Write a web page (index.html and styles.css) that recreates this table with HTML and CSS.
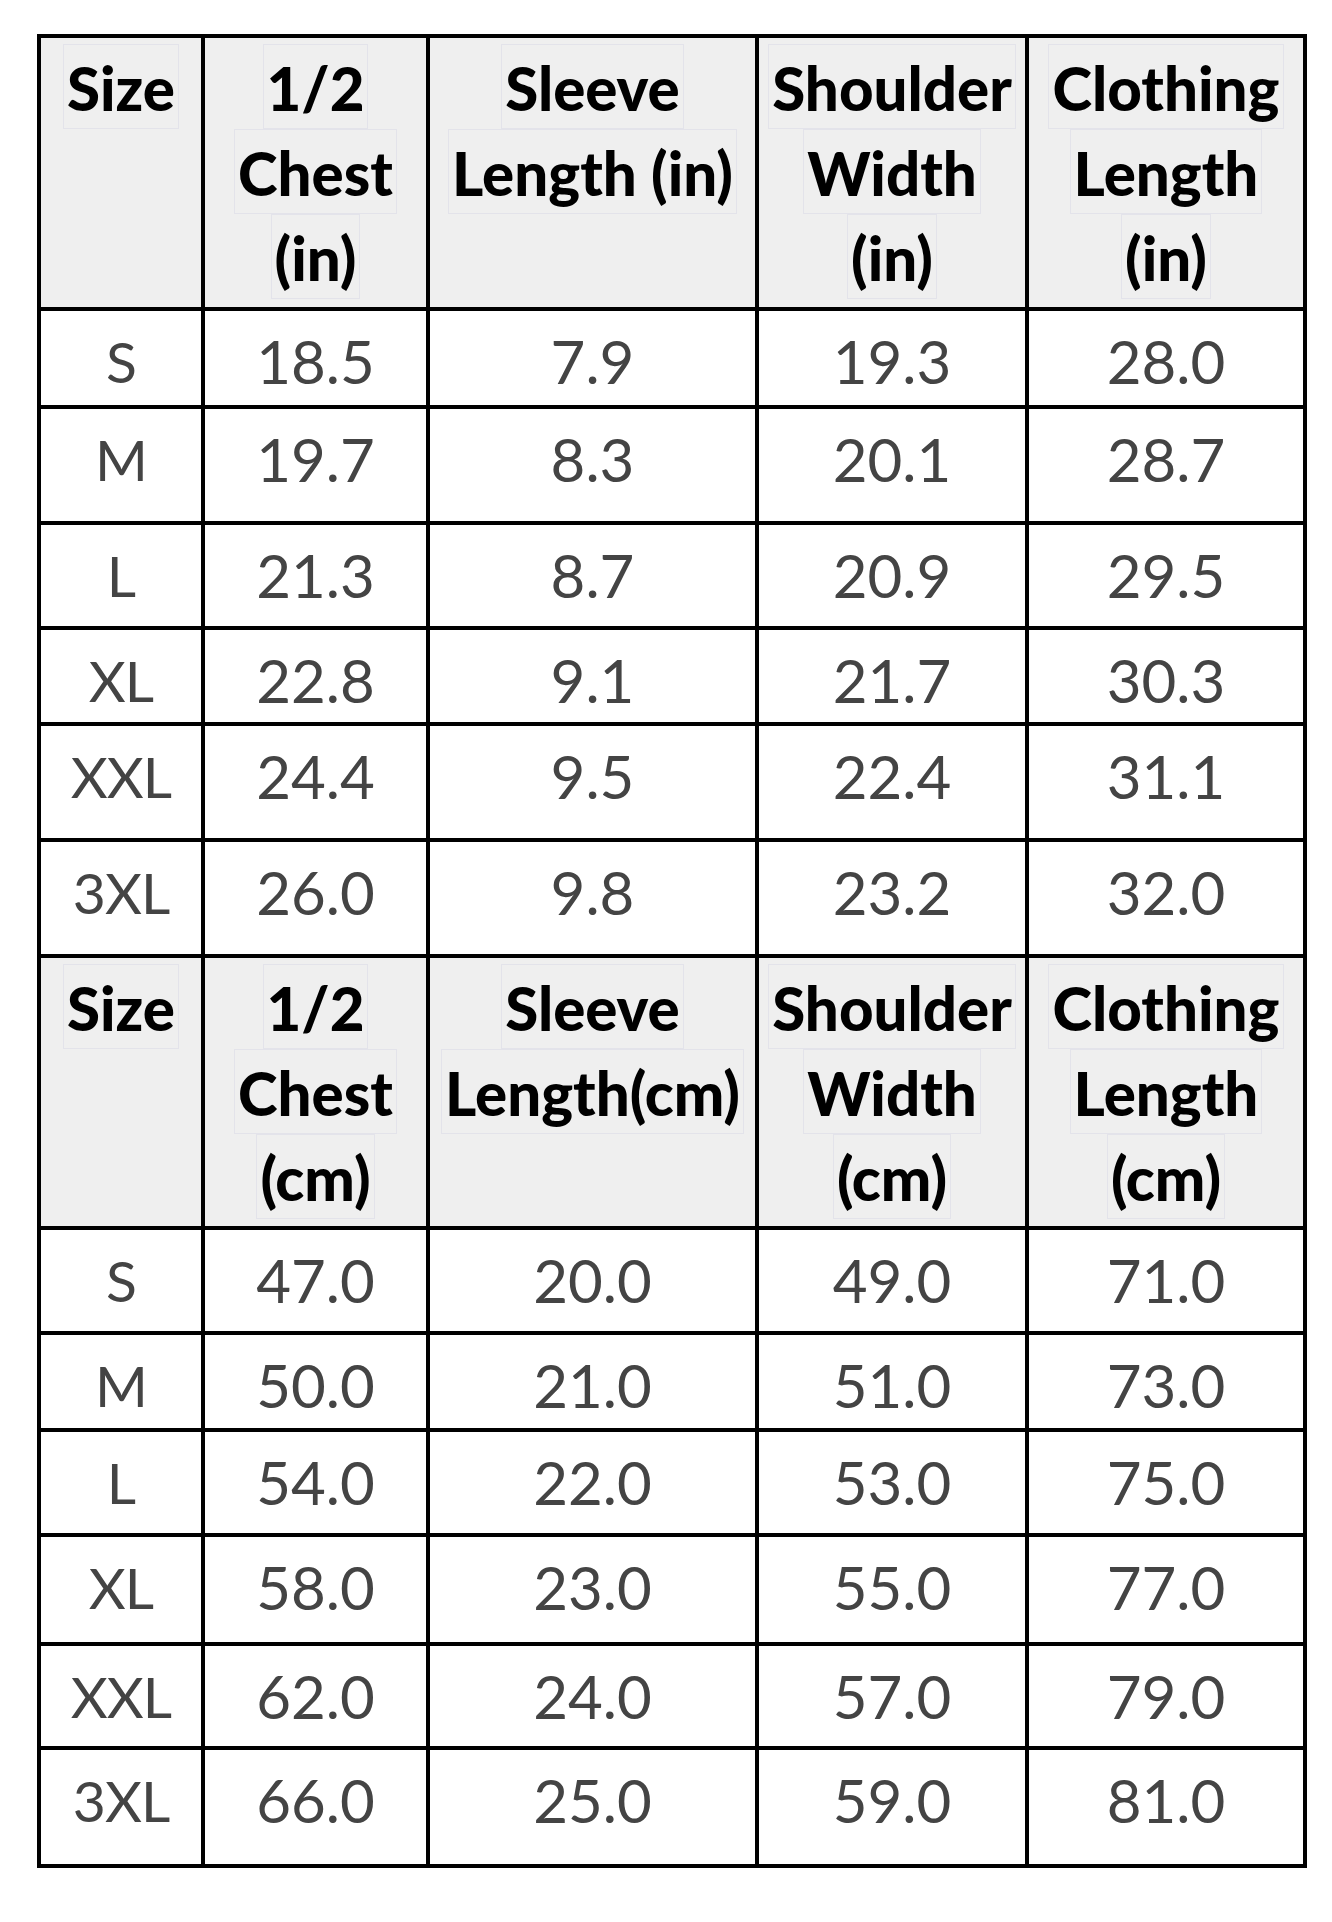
FILE: index.html
```html
<!DOCTYPE html>
<html lang="en">
<head>
<meta charset="utf-8">
<title>Size Chart</title>
<link rel="stylesheet" href="styles.css">
</head>
<body>
<div class="chart">
  <div class="hd"><span>Size</span></div>
  <div class="hd"><span>1/2</span><span>Chest</span><span>(in)</span></div>
  <div class="hd"><span>Sleeve</span><span>Length (in)</span></div>
  <div class="hd"><span>Shoulder</span><span>Width</span><span>(in)</span></div>
  <div class="hd"><span>Clothing</span><span>Length</span><span>(in)</span></div>

  <div class="cd sz">S</div><div class="cd">18.5</div><div class="cd">7.9</div><div class="cd">19.3</div><div class="cd">28.0</div>
  <div class="cd sz">M</div><div class="cd">19.7</div><div class="cd">8.3</div><div class="cd">20.1</div><div class="cd">28.7</div>
  <div class="cd sz">L</div><div class="cd">21.3</div><div class="cd">8.7</div><div class="cd">20.9</div><div class="cd">29.5</div>
  <div class="cd sz">XL</div><div class="cd">22.8</div><div class="cd">9.1</div><div class="cd">21.7</div><div class="cd">30.3</div>
  <div class="cd sz">XXL</div><div class="cd">24.4</div><div class="cd">9.5</div><div class="cd">22.4</div><div class="cd">31.1</div>
  <div class="cd sz">3XL</div><div class="cd">26.0</div><div class="cd">9.8</div><div class="cd">23.2</div><div class="cd">32.0</div>

  <div class="hd"><span>Size</span></div>
  <div class="hd"><span>1/2</span><span>Chest</span><span>(cm)</span></div>
  <div class="hd"><span>Sleeve</span><span>Length(cm)</span></div>
  <div class="hd"><span>Shoulder</span><span>Width</span><span>(cm)</span></div>
  <div class="hd"><span>Clothing</span><span>Length</span><span>(cm)</span></div>

  <div class="cd sz">S</div><div class="cd">47.0</div><div class="cd">20.0</div><div class="cd">49.0</div><div class="cd">71.0</div>
  <div class="cd sz">M</div><div class="cd">50.0</div><div class="cd">21.0</div><div class="cd">51.0</div><div class="cd">73.0</div>
  <div class="cd sz">L</div><div class="cd">54.0</div><div class="cd">22.0</div><div class="cd">53.0</div><div class="cd">75.0</div>
  <div class="cd sz">XL</div><div class="cd">58.0</div><div class="cd">23.0</div><div class="cd">55.0</div><div class="cd">77.0</div>
  <div class="cd sz">XXL</div><div class="cd">62.0</div><div class="cd">24.0</div><div class="cd">57.0</div><div class="cd">79.0</div>
  <div class="cd sz">3XL</div><div class="cd">66.0</div><div class="cd">25.0</div><div class="cd">59.0</div><div class="cd">81.0</div>
</div>
</body>
</html>
```
FILE: styles.css
```css
html, body {
  margin: 0;
  padding: 0;
  background: #ffffff;
}

body {
  font-family: Lato, "Open Sans", "Noto Sans", sans-serif;
}

.chart {
  display: grid;
  grid-template-columns: 160px 221px 325px 266px 274px;
  grid-template-rows: 269px 94px 112px 101px 92px 112px 112px 268px 101px 93px 101px 105px 100px 114px;
  gap: 4px;
  padding: 4px;
  background: #000000;
  width: max-content;
  margin: 34px 0 0 37px;
}

.hd {
  background: #efefef;
  display: flex;
  flex-direction: column;
  align-items: center;
  padding-top: 6px;
  box-sizing: border-box;
}

.hd span {
  display: block;
  border: 1px solid #e3e3ea;
  padding: 0 3px;
  height: 83px;
  line-height: 86px;
  font-size: 60px;
  font-weight: 900;
  color: #000000;
  white-space: nowrap;
}

.cd {
  background: #ffffff;
  text-align: center;
  font-size: 60px;
  line-height: 1;
  padding-top: 20px;
  box-sizing: border-box;
  color: #444444;
}

.cd.sz {
  font-size: 57px;
  padding-top: 22px;
  letter-spacing: -1px;
}
```
